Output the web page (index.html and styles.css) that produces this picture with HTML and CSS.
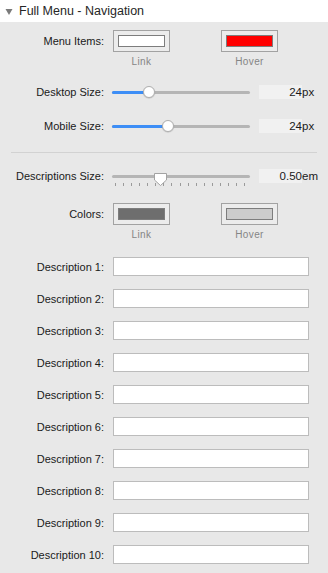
FILE: index.html
```
<!DOCTYPE html>
<html lang="en">

<head>
    <meta charset="UTF-8">
    <title>Full Menu - Navigation</title>
    <meta name="viewport" content="width=device-width, initial-scale=1">
    <link rel="stylesheet" href="styles.css">
</head>

<body>
    <div class="panel">
        <div class="panel-head">
            <svg class="disclosure" width="8" height="6" viewBox="0 0 8 6"><polygon points="0.5,0 7.5,0 4,6" fill="#7a7a7a"/></svg>
            <span>Full Menu - Navigation</span>
        </div>

        <div class="panel-body">
            <div class="row row-wells">
                <span class="label">Menu Items:</span>
                <div class="wells">
                    <div class="well-item">
                        <span class="well"><span class="swatch" style="background:#ffffff"></span></span>
                        <span class="well-cap">Link</span>
                    </div>
                    <div class="well-item">
                        <span class="well"><span class="swatch" style="background:#ff0000"></span></span>
                        <span class="well-cap">Hover</span>
                    </div>
                </div>
            </div>

            <div class="row row-slider first-slider">
                <span class="label">Desktop Size:</span>
                <div class="slider">
                    <div class="track"><div class="fill" style="width:37px"></div></div>
                    <span class="thumb" style="left:31px"></span>
                </div>
                <span class="value"><span class="value-box">24</span>px</span>
            </div>

            <div class="row row-slider">
                <span class="label">Mobile Size:</span>
                <div class="slider">
                    <div class="track"><div class="fill" style="width:56px"></div></div>
                    <span class="thumb" style="left:50px"></span>
                </div>
                <span class="value"><span class="value-box">24</span>px</span>
            </div>

            <hr class="separator">

            <div class="row row-slider desc-slider">
                <span class="label">Descriptions Size:</span>
                <div class="slider">
                    <div class="track"></div>
                    <svg class="thumb-point" style="left:42px" width="13" height="13" viewBox="0 0 13 13"><polygon points="0.5,0.5 12.5,0.5 12.5,7 6.5,12.5 0.5,7" fill="#ffffff" stroke="#a3a3a3"/></svg>
                    <div class="ticks">
                        <i></i><i></i><i></i><i></i><i></i><i></i><i></i><i></i><i></i>
                        <i></i><i></i><i></i><i></i><i></i><i></i><i></i><i></i>
                    </div>
                </div>
                <span class="value"><span class="value-box">0.50</span>em</span>
            </div>

            <div class="row row-wells colors-row">
                <span class="label">Colors:</span>
                <div class="wells">
                    <div class="well-item">
                        <span class="well"><span class="swatch" style="background:#6e6e6e"></span></span>
                        <span class="well-cap">Link</span>
                    </div>
                    <div class="well-item">
                        <span class="well"><span class="swatch" style="background:#cccccc"></span></span>
                        <span class="well-cap">Hover</span>
                    </div>
                </div>
            </div>

            <div class="descriptions">
                <label class="row row-input"><span class="label">Description 1:</span><input type="text"></label>
                <label class="row row-input"><span class="label">Description 2:</span><input type="text"></label>
                <label class="row row-input"><span class="label">Description 3:</span><input type="text"></label>
                <label class="row row-input"><span class="label">Description 4:</span><input type="text"></label>
                <label class="row row-input"><span class="label">Description 5:</span><input type="text"></label>
                <label class="row row-input"><span class="label">Description 6:</span><input type="text"></label>
                <label class="row row-input"><span class="label">Description 7:</span><input type="text"></label>
                <label class="row row-input"><span class="label">Description 8:</span><input type="text"></label>
                <label class="row row-input"><span class="label">Description 9:</span><input type="text"></label>
                <label class="row row-input"><span class="label">Description 10:</span><input type="text"></label>
            </div>
        </div>
    </div>
</body>

</html>
```

FILE: styles.css
```
body {
    margin: 0;
    font-family: "Liberation Sans", Arial, sans-serif;
    color: #1a1a1a;
    background-color: #e8e8e8;
}

.panel {
    width: 328px;
    height: 573px;
    background-color: #e8e8e8;
    overflow: hidden;
}

.panel-head {
    height: 22px;
    background-color: #ffffff;
    display: flex;
    align-items: center;
    font-size: 12.5px;
    color: #262626;
}

.disclosure {
    margin: 1px 6px 0 5px;
}

.panel-body {
    padding-top: 8px;
}

.row {
    display: flex;
    align-items: center;
}

.label {
    width: 104px;
    flex: none;
    text-align: right;
    font-size: 11px;
    margin-right: 9px;
    white-space: nowrap;
}

/* color wells */
.row-wells {
    align-items: flex-start;
}

.row-wells .label {
    line-height: 22px;
}

.wells {
    display: flex;
    gap: 51px;
}

.well-item {
    display: flex;
    flex-direction: column;
    align-items: center;
}

.well {
    width: 57px;
    height: 22px;
    box-sizing: border-box;
    border: 1px solid #a2a2a2;
    background-color: #ececec;
    display: flex;
    align-items: center;
    justify-content: center;
}

.swatch {
    width: 47px;
    height: 12px;
    box-sizing: border-box;
    border: 1px solid #7d7d7d;
}

.well-cap {
    margin-top: 4px;
    font-size: 10px;
    line-height: 12px;
    letter-spacing: 0.4px;
    color: #858585;
}

/* sliders */
.row-slider {
    height: 20px;
}

.first-slider {
    margin-top: 14px;
}

.row-slider + .row-slider {
    margin-top: 14px;
}

.slider {
    position: relative;
    width: 138px;
    height: 20px;
    margin-left: -1px;
    display: flex;
    align-items: center;
}

.track {
    width: 100%;
    height: 3px;
    border-radius: 2px;
    background-color: #b5b5b5;
}

.fill {
    height: 3px;
    border-radius: 2px;
    background-color: #3d8ef6;
}

.thumb {
    position: absolute;
    top: 4px;
    width: 12px;
    height: 12px;
    box-sizing: border-box;
    border-radius: 50%;
    background-color: #ffffff;
    border: 1px solid #b0b0b0;
    box-shadow: 0 0.5px 1px rgba(0, 0, 0, 0.2);
}

.thumb-point {
    position: absolute;
    top: 7px;
}

.ticks {
    position: absolute;
    left: 3px;
    top: 17px;
    width: 130px;
    height: 3px;
    display: flex;
    justify-content: space-between;
}

.ticks i {
    width: 1px;
    height: 3px;
    background-color: #9a9a9a;
}

.value {
    margin-left: 9px;
    font-size: 11.5px;
    display: flex;
    align-items: center;
    white-space: nowrap;
}

.value-box {
    width: 43px;
    height: 14px;
    line-height: 14px;
    text-align: right;
    background-color: #f1f1f1;
}

.separator {
    margin: 16px 11px 0 11px;
    border: none;
    border-top: 1px solid #d2d2d2;
    height: 0;
}

.desc-slider {
    margin-top: 13px;
}

.colors-row {
    margin-top: 17px;
}

/* description inputs */
.descriptions {
    margin-top: 16px;
}

.row-input + .row-input {
    margin-top: 13px;
}

.row-input input {
    width: 196px;
    height: 19px;
    box-sizing: border-box;
    margin: 0;
    padding: 0 3px;
    border: 1px solid #bcbcbc;
    background-color: #ffffff;
    font-family: inherit;
    font-size: 12px;
}
```
